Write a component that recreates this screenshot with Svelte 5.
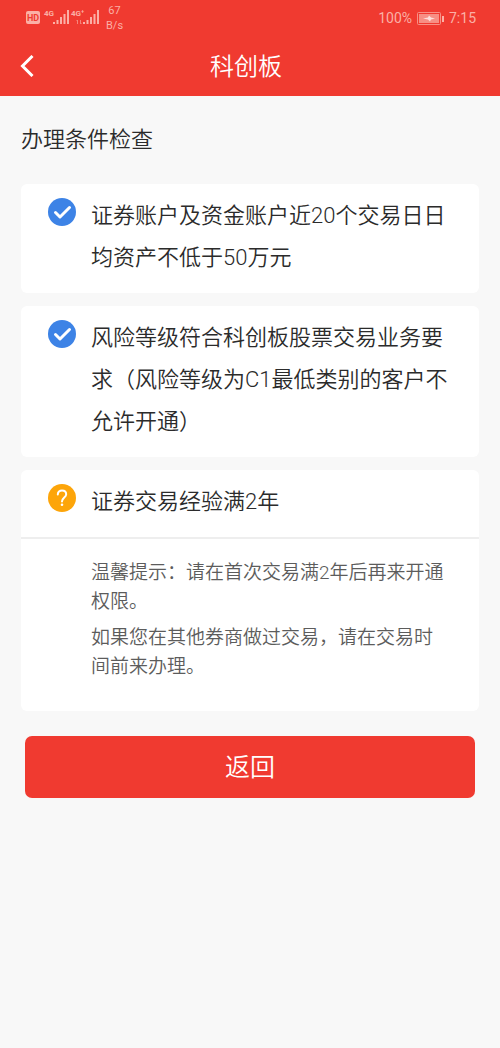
<script lang="ts">
  type Condition = {
    text: string;
    passed: boolean;
    notes?: string[];
  };

  const conditions: Condition[] = [
    { text: "证券账户及资金账户近20个交易日日均资产不低于50万元", passed: true },
    {
      text: "风险等级符合科创板股票交易业务要求（风险等级为C1最低类别的客户不允许开通）",
      passed: true,
    },
    {
      text: "证券交易经验满2年",
      passed: false,
      notes: [
        "温馨提示：请在首次交易满2年后再来开通权限。",
        "如果您在其他券商做过交易，请在交易时间前来办理。",
      ],
    },
  ];
</script>

{#snippet bars()}
  <path d="M1 14v-2M4.500 14v-4M8 14V7M11.500 14V4M15 14V0" />
{/snippet}

<header class="top">
  <div class="status">
    <div class="status-side">
      <svg class="signals" width="74" height="16" viewBox="0 0 74 16" aria-hidden="true">
        <rect class="fill" x="0" y="1" width="14" height="13" rx="2" />
        <text class="hd" x="7" y="11" text-anchor="middle">HD</text>
        <text class="net" x="18" y="6">4G</text>
        <g class="bars" transform="translate(27 0)">{@render bars()}</g>
        <text class="net" x="45" y="6">4G⁺</text>
        <path class="arrows" d="M51.500 14v-4l-1 1M54.500 10v4l1-1" />
        <g class="bars" transform="translate(57 0)">{@render bars()}</g>
      </svg>
      <div class="speed">
        <span>67</span>
        <span>B/s</span>
      </div>
    </div>
    <div class="status-side">
      <span>100%</span>
      <svg width="27" height="13" viewBox="0 0 27 13" aria-hidden="true">
        <rect class="shell" x="0.5" y="0.5" width="23" height="12" rx="1" />
        <rect class="charge" x="2" y="2" width="20" height="9" />
        <path class="bolt" d="M6 6.500l5-1 1-2 2 2 4 1-4 1-1 2-2-2z" />
        <rect class="fill" x="25" y="4" width="2" height="6" />
      </svg>
      <span>7:15</span>
    </div>
  </div>
  <nav class="nav">
    <button class="back" aria-label="返回上一页">
      <svg width="14" height="22" viewBox="0 0 14 22" aria-hidden="true">
        <path d="M12.500 1L2.500 11l10 10" />
      </svg>
    </button>
    <h1>科创板</h1>
  </nav>
</header>

<main>
  <h2>办理条件检查</h2>
  <ul class="cards">
    {#each conditions as item}
      <li class="card">
        <div class="condition">
          {#if item.passed}
            <svg class="mark" width="28" height="28" viewBox="0 0 28 28" aria-hidden="true">
              <circle class="ok" cx="14" cy="14" r="14" />
              <path class="tick" d="M7.500 14.500l4.500 4.500 9.500-9.500" />
            </svg>
          {:else}
            <svg class="mark" width="28" height="28" viewBox="0 0 28 28" aria-hidden="true">
              <circle class="warn" cx="14" cy="14" r="14" />
              <path class="ask" d="M9.800 10.500c0-2.600 1.800-4 4.200-4s4.200 1.500 4.200 3.800c0 3.200-4.200 3.400-4.200 7.200" />
              <circle class="dot" cx="14" cy="20.800" r="1.300" />
            </svg>
          {/if}
          <p>{item.text}</p>
        </div>
        {#if item.notes}
          <div class="notes">
            {#each item.notes as note}
              <p>{note}</p>
            {/each}
          </div>
        {/if}
      </li>
    {/each}
  </ul>
  <button class="submit">返回</button>
</main>

<style>
  :global(body) {
    background: #f8f8f8;
    color: #2b2b2b;
    font-family: Roboto, "Noto Sans CJK SC", sans-serif;
    font-weight: 350;
  }

  h1,
  h2,
  p,
  ul {
    margin: 0;
    padding: 0;
    font-weight: inherit;
  }

  button {
    border: none;
    color: #fff;
    font-family: inherit;
    font-weight: inherit;
    cursor: pointer;
  }

  .top {
    background: #f03a30;
    color: #fff;
  }

  .status {
    display: flex;
    justify-content: space-between;
    height: 36px;
    padding: 0 24px 0 26px;
    color: #fbb0a6;
    font-size: 14px;
    font-weight: 400;
  }

  .status-side {
    display: flex;
    align-items: center;
    gap: 5px;
  }

  .signals {
    overflow: visible;
  }

  .speed {
    display: flex;
    flex-direction: column;
    align-items: center;
    padding-left: 1px;
    font-size: 11px;
    line-height: 15px;
  }

  .fill {
    fill: #fbb0a6;
  }

  .hd {
    fill: #f03a30;
    font-size: 9px;
    font-weight: 700;
  }

  .net {
    fill: #fbb0a6;
    font-size: 8px;
    font-weight: 700;
  }

  .bars {
    fill: none;
    stroke: #fbb0a6;
    stroke-width: 2;
  }

  .arrows {
    fill: none;
    stroke: #f6857b;
    stroke-width: 1;
  }

  .shell {
    fill: none;
    stroke: #f78f84;
  }

  .charge {
    fill: #f78f84;
  }

  .bolt {
    fill: #fde0dc;
  }

  .nav {
    display: grid;
    grid-template-columns: 56px 1fr 64px;
    align-items: center;
    height: 60px;
  }

  .nav h1 {
    padding-top: 2px;
    font-size: 24px;
    line-height: 36px;
    text-align: center;
  }

  .back {
    display: flex;
    padding: 8px 20px;
    background: none;
  }

  .back path {
    fill: none;
    stroke: #fff;
    stroke-width: 3;
  }

  main {
    padding: 22px 21px;
  }

  h2 {
    margin-bottom: 22px;
    font-size: 22px;
    line-height: 44px;
  }

  .cards {
    display: flex;
    flex-direction: column;
    gap: 13px;
    list-style: none;
  }

  .card {
    border-radius: 6px;
    background: #fff;
  }

  .condition {
    display: flex;
    align-items: flex-start;
    gap: 15px;
    padding: 11px 20px 14px 27px;
    font-size: 22px;
    line-height: 42px;
  }

  .mark {
    flex: none;
    margin-top: 3px;
  }

  .ok {
    fill: #3d83e6;
  }

  .warn {
    fill: #fda50a;
  }

  .tick,
  .ask {
    fill: none;
    stroke: #fff;
    stroke-width: 3;
    stroke-linecap: round;
    stroke-linejoin: round;
  }

  .ask {
    stroke-width: 2;
  }

  .dot {
    fill: #fff;
  }

  .notes {
    display: flex;
    flex-direction: column;
    gap: 7px;
    padding: 19px 32px 30px 70px;
    border-top: 2px solid #eee;
    color: #5c5c5c;
    font-size: 19px;
    line-height: 29px;
  }

  .submit {
    display: block;
    width: calc(100% - 8px);
    height: 62px;
    margin: 25px 4px 0;
    padding: 0 0 5px;
    border-radius: 7px;
    background: #f03a30;
    font-size: 25px;
  }
</style>
